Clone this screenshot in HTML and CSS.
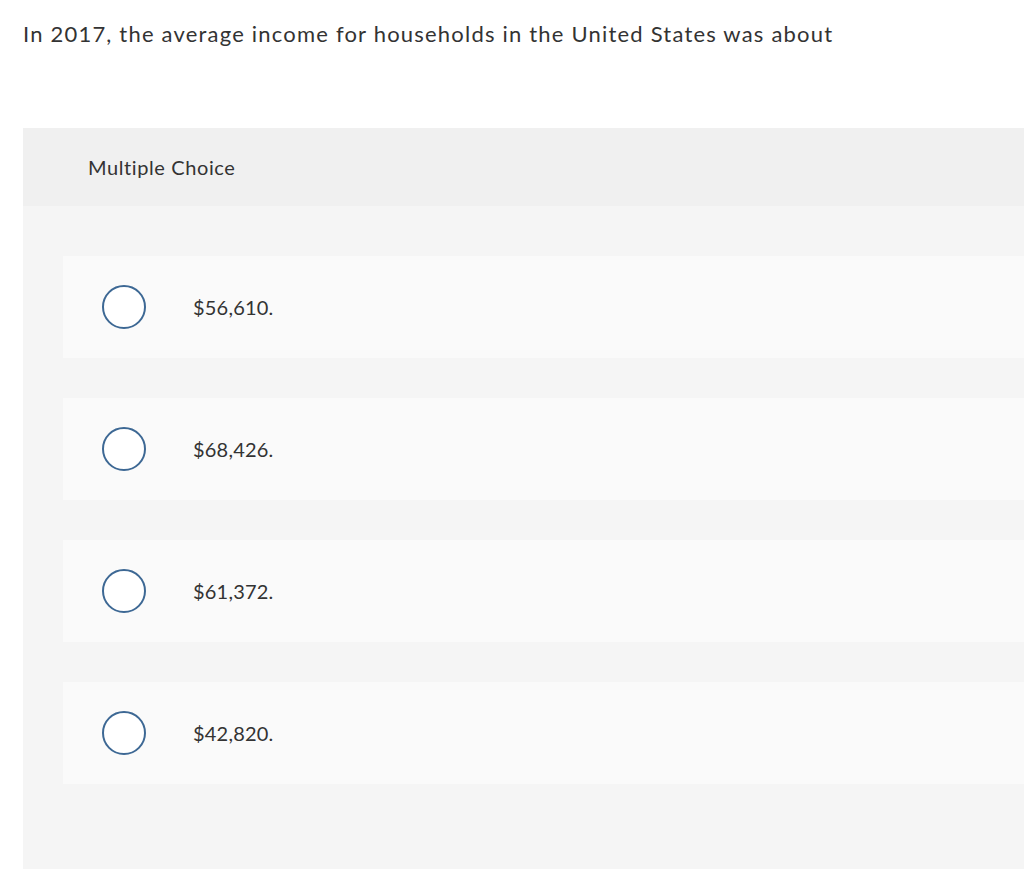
FILE: index.html
```html
<!DOCTYPE html>
<html>
<head>
<meta charset="utf-8">
<link rel="stylesheet" href="styles.css">
</head>
<body>
<p class="prompt">In 2017, the average income for households in the United States was about</p>
<section class="panel">
  <div class="panel-head">Multiple Choice</div>
  <div class="panel-body">
    <label class="choice"><span class="radio"></span><span class="choice-text">$56,610.</span></label>
    <label class="choice"><span class="radio"></span><span class="choice-text">$68,426.</span></label>
    <label class="choice"><span class="radio"></span><span class="choice-text">$61,372.</span></label>
    <label class="choice"><span class="radio"></span><span class="choice-text">$42,820.</span></label>
  </div>
</section>
</body>
</html>
```
FILE: styles.css
```css
html, body {
  margin: 0;
  padding: 0;
  background: #ffffff;
  overflow-x: hidden;
}
body {
  font-family: Lato, "Open Sans", Arial, sans-serif;
  color: #333333;
}
.prompt {
  margin: 0;
  padding: 19px 0 0 23px;
  font-size: 22px;
  line-height: 30px;
  letter-spacing: 1.2px;
  height: 128px;
  box-sizing: border-box;
}
.panel {
  margin-left: 23px;
  background: #f5f5f5;
}
.panel-head {
  background: #f0f0f0;
  height: 78px;
  padding-left: 65px;
  display: flex;
  align-items: center;
  font-size: 20px;
  letter-spacing: 0.6px;
  box-sizing: border-box;
}
.panel-body {
  padding: 50px 0 85px 40px;
  display: flex;
  flex-direction: column;
  gap: 40px;
}
.choice {
  background: #fafafa;
  height: 102px;
  display: flex;
  align-items: center;
  padding-left: 39px;
}
.radio {
  width: 44px;
  height: 44px;
  box-sizing: border-box;
  border: 2px solid #3d6894;
  border-radius: 50%;
  background: #ffffff;
  flex: none;
}
.choice-text {
  margin-left: 47px;
  font-size: 20px;
  letter-spacing: 0.2px;
}
```
